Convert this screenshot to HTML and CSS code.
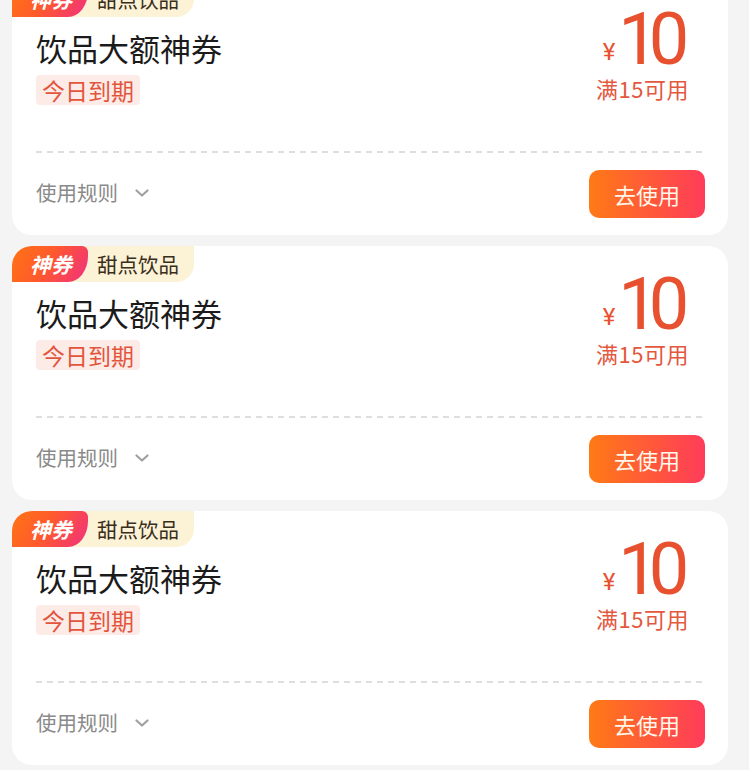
FILE: index.html
```html
<!DOCTYPE html>
<html lang="zh">
<head>
<meta charset="utf-8">
<link rel="stylesheet" href="styles.css">
</head>
<body>
<div class="list">
  <div class="card">
    <div class="badge"><span class="badge-hot">神券</span><span class="badge-cat">甜点饮品</span></div>
    <div class="top">
      <div class="info">
        <div class="title">饮品大额神券</div>
        <div class="expire">今日到期</div>
      </div>
      <div class="price">
        <div class="amount"><span class="yen">¥</span><span class="num">10</span></div>
        <div class="cond">满15可用</div>
      </div>
    </div>
    <div class="divider"></div>
    <div class="foot">
      <div class="rules">使用规则<svg class="chev" viewBox="0 0 14 8" width="14" height="8"><path d="M1.5 1.5 L7 6.5 L12.5 1.5" fill="none" stroke="#a0a0a0" stroke-width="2.2" stroke-linecap="round" stroke-linejoin="round"/></svg></div>
      <div class="btn">去使用</div>
    </div>
  </div>
  <div class="card">
    <div class="badge"><span class="badge-hot">神券</span><span class="badge-cat">甜点饮品</span></div>
    <div class="top">
      <div class="info">
        <div class="title">饮品大额神券</div>
        <div class="expire">今日到期</div>
      </div>
      <div class="price">
        <div class="amount"><span class="yen">¥</span><span class="num">10</span></div>
        <div class="cond">满15可用</div>
      </div>
    </div>
    <div class="divider"></div>
    <div class="foot">
      <div class="rules">使用规则<svg class="chev" viewBox="0 0 14 8" width="14" height="8"><path d="M1.5 1.5 L7 6.5 L12.5 1.5" fill="none" stroke="#a0a0a0" stroke-width="2.2" stroke-linecap="round" stroke-linejoin="round"/></svg></div>
      <div class="btn">去使用</div>
    </div>
  </div>
  <div class="card">
    <div class="badge"><span class="badge-hot">神券</span><span class="badge-cat">甜点饮品</span></div>
    <div class="top">
      <div class="info">
        <div class="title">饮品大额神券</div>
        <div class="expire">今日到期</div>
      </div>
      <div class="price">
        <div class="amount"><span class="yen">¥</span><span class="num">10</span></div>
        <div class="cond">满15可用</div>
      </div>
    </div>
    <div class="divider"></div>
    <div class="foot">
      <div class="rules">使用规则<svg class="chev" viewBox="0 0 14 8" width="14" height="8"><path d="M1.5 1.5 L7 6.5 L12.5 1.5" fill="none" stroke="#a0a0a0" stroke-width="2.2" stroke-linecap="round" stroke-linejoin="round"/></svg></div>
      <div class="btn">去使用</div>
    </div>
  </div>
</div>
</body>
</html>
```
FILE: styles.css
```css
html, body {
  margin: 0;
  padding: 0;
  background: #f4f4f4;
  font-family: "Noto Sans CJK SC", "Noto Sans", sans-serif;
  overflow: hidden;
}
.list {
  display: flex;
  flex-direction: column;
  gap: 11px;
  width: 716px;
  margin-left: 12px;
  margin-top: -19px;
}
.card {
  position: relative;
  background: #fff;
  border-radius: 20px;
  height: 254px;
  box-sizing: border-box;
  padding: 0 23px 17px 24px;
}
.badge {
  position: absolute;
  left: 0;
  top: 0;
  display: flex;
  height: 36px;
  background: #fcf3d6;
  border-radius: 20px 0 18px 0;
}
.badge-hot {
  display: flex;
  align-items: center;
  justify-content: center;
  width: 76px;
  height: 36px;
  box-sizing: border-box;
  padding-left: 2px;
  background: linear-gradient(120deg, #ff7414 0%, #ff5a2c 45%, #f0307f 100%);
  border-radius: 20px 6px 20px 0 / 20px 6px 26px 0;
  color: #fff;
  font-size: 21px;
  font-weight: 700;
  font-style: italic;
}
.badge-cat {
  display: flex;
  align-items: center;
  padding: 0 15px 0 9px;
  font-size: 20.5px;
  color: #3a2d1c;
}
.top {
  display: flex;
  justify-content: space-between;
}
.info {
  padding-top: 49px;
  display: flex;
  flex-direction: column;
  align-items: flex-start;
}
.title {
  font-size: 31px;
  line-height: 36px;
  color: #1b1b1b;
}
.expire {
  margin-top: 9px;
  height: 30px;
  line-height: 30px;
  padding: 0 6px;
  font-size: 23px;
  color: #e2553d;
  background: #fdebe7;
  border-radius: 4px;
}
.price {
  width: 125px;
  padding-top: 27px;
  display: flex;
  flex-direction: column;
  align-items: center;
  color: #e8512f;
}
.amount {
  display: flex;
  align-items: flex-end;
  height: 64px;
  margin-left: 7px;
}
.yen {
  font-family: "Roboto", sans-serif;
  font-size: 24px;
  line-height: 24px;
  margin-bottom: 8px;
  margin-right: 3px;
}
.num {
  font-family: "Roboto", sans-serif;
  font-size: 72px;
  line-height: 64px;
  letter-spacing: -10px;
  margin-right: 10px;
}
.cond {
  margin-top: 1px;
  height: 30px;
  line-height: 30px;
  font-size: 22px;
  color: #e4583e;
  letter-spacing: 0.5px;
}
.divider {
  margin-top: 46px;
  height: 2px;
  background: repeating-linear-gradient(to right, #dedede 0 6px, transparent 6px 11px);
}
.foot {
  margin-top: 17px;
  display: flex;
  justify-content: space-between;
  align-items: center;
}
.rules {
  display: flex;
  align-items: center;
  font-size: 20.5px;
  color: #8a8a8a;
  margin-bottom: 4px;
}
.chev {
  margin-left: 17px;
  margin-top: 2px;
}
.btn {
  width: 116px;
  height: 48px;
  border-radius: 10px;
  background: linear-gradient(to right, #ff7a16, #ff3c5a);
  color: #fff7ea;
  font-size: 22px;
  display: flex;
  align-items: center;
  justify-content: center;
}
```
